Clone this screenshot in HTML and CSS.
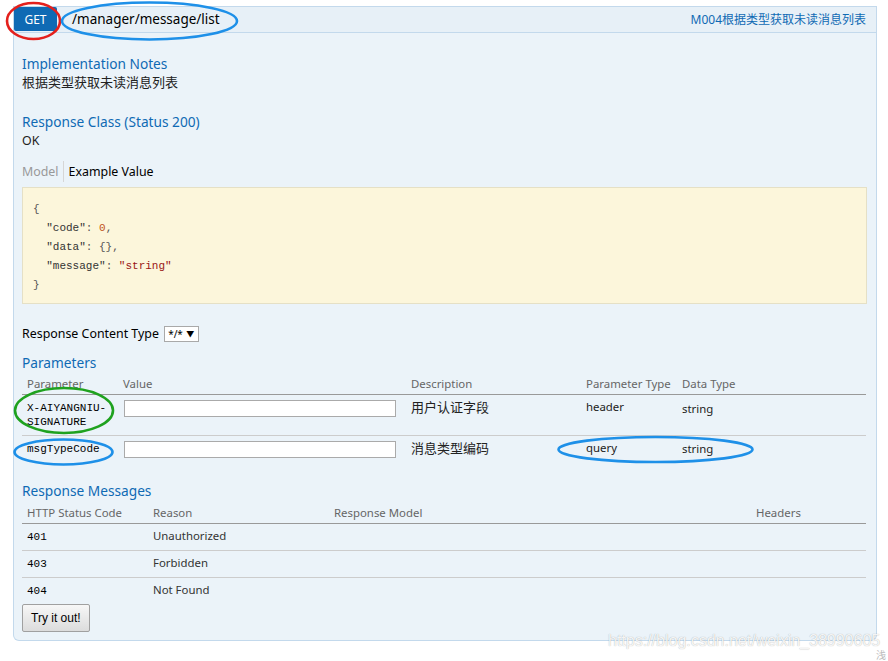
FILE: index.html
```html
<!DOCTYPE html>
<html>
<head>
<meta charset="utf-8">
<title>/manager/message/list</title>
<link rel="stylesheet" href="styles.css">
</head>
<body>
<div class="op">
  <div class="heading">
    <span class="method">GET</span>
    <span class="path">/manager/message/list</span>
    <span class="summary">M004根据类型获取未读消息列表</span>
  </div>
  <div class="content">
    <h4 class="h first">Implementation Notes</h4>
    <p class="text cjk">根据类型获取未读消息列表</p>
    <h4 class="h">Response Class (Status 200)</h4>
    <p class="text ok">OK</p>
    <div class="tabs"><span class="tab-model">Model</span><span class="tab-sep"></span><span class="tab-ex">Example Value</span></div>
<pre class="code"><span class="p">{</span>
  <span class="k">"code"</span><span class="p">:</span> <span class="n">0</span><span class="p">,</span>
  <span class="k">"data"</span><span class="p">: {},</span>
  <span class="k">"message"</span><span class="p">:</span> <span class="s">"string"</span>
<span class="p">}</span></pre>
    <div class="ctype">Response Content Type <span class="select"><span>*/*</span><span class="arrow">▼</span></span></div>
    <h4 class="h params-h">Parameters</h4>
    <table class="tbl ptable">
      <colgroup><col class="c1"><col class="c2"><col class="c3"><col class="c4"><col class="c5"></colgroup>
      <thead>
        <tr><th>Parameter</th><th>Value</th><th>Description</th><th>Parameter Type</th><th>Data Type</th></tr>
      </thead>
      <tbody>
        <tr>
          <td class="mono">X-AIYANGNIU-SIGNATURE</td>
          <td><span class="input"></span></td>
          <td class="desc">用户认证字段</td>
          <td>header</td>
          <td class="dt">string</td>
        </tr>
        <tr>
          <td class="mono">msgTypeCode</td>
          <td><span class="input"></span></td>
          <td class="desc">消息类型编码</td>
          <td>query</td>
          <td class="dt2">string</td>
        </tr>
      </tbody>
    </table>
    <h4 class="h resp-h">Response Messages</h4>
    <table class="tbl rtable">
      <colgroup><col class="r1"><col class="r2"><col class="r3"><col class="r4"></colgroup>
      <thead>
        <tr><th>HTTP Status Code</th><th>Reason</th><th>Response Model</th><th>Headers</th></tr>
      </thead>
      <tbody>
        <tr><td class="mono">401</td><td>Unauthorized</td><td></td><td></td></tr>
        <tr><td class="mono">403</td><td>Forbidden</td><td></td><td></td></tr>
        <tr><td class="mono">404</td><td>Not Found</td><td></td><td></td></tr>
      </tbody>
    </table>
    <button class="try">Try it out!</button>
  </div>
</div>

<svg class="marks" width="888" height="661" viewBox="0 0 888 661">
  <ellipse cx="33.5" cy="21" rx="26.5" ry="18" class="red"/>
  <ellipse cx="149.5" cy="21" rx="87.5" ry="18.5" class="blue"/>
  <ellipse cx="64" cy="410.5" rx="49" ry="22.5" class="green"/>
  <ellipse cx="63.5" cy="452" rx="49" ry="12.5" class="blue"/>
  <ellipse cx="655.5" cy="449.5" rx="97" ry="12.5" class="blue"/>
</svg>
<div class="watermark">https://blog.csdn.net/weixin_38990605</div>
<div class="corner">浅</div>
</body>
</html>
```

FILE: styles.css
```css
body {
  margin: 0;
  background: #fff;
  font-family: "Noto Sans", "Noto Sans CJK SC", sans-serif;
  font-size: 12.4px;
  color: #000;
}

.op {
  margin: 6px 0 0 13px;
  width: 864px;
}

.heading {
  display: flex;
  align-items: flex-start;
  height: 25px;
  border: 1px solid #c3d9ec;
  background: #e7f0f7;
}

.method {
  display: flex;
  align-items: center;
  justify-content: center;
  width: 43px;
  height: 24px;
  background: #0f6ab4;
  color: #fff;
  font-size: 12px;
  border-radius: 2px;
}

.path {
  margin-left: 15px;
  font-size: 13.5px;
  line-height: 25px;
  color: #000;
}

.summary {
  margin-left: auto;
  padding-right: 10px;
  font-size: 12px;
  line-height: 25px;
  color: #0f6ab4;
}

.content {
  background: #ebf3f9;
  border: 1px solid #c3d9ec;
  border-top: none;
  border-radius: 0 0 6px 6px;
  padding: 0 9px 8px 8px;
}

.h {
  margin: 0;
  padding-top: 21px;
  font-size: 13.7px;
  line-height: 19px;
  font-weight: normal;
  color: #0f6ab4;
}

.text {
  margin: 0;
  line-height: 18px;
  color: #222;
}

.text.cjk {
  font-size: 13px;
}

.text.ok {
  padding-top: 1px;
}

.tabs {
  display: flex;
  align-items: stretch;
  margin-top: 11px;
  line-height: 21px;
}

.tab-model {
  color: #999;
  padding-right: 4px;
}

.tab-sep {
  width: 1px;
  background: #d6d6d6;
}

.tab-ex {
  padding-left: 5px;
  color: #000;
}

.code {
  margin: 5px 0 0;
  padding: 12px 10px 8px;
  background: #fcf6db;
  border: 1px solid #e5e0c6;
  font-family: "Liberation Mono", "DejaVu Sans Mono", monospace;
  font-size: 11px;
  line-height: 19px;
  color: #333;
}

.code .k { color: #333; }
.code .p { color: #555; }
.code .n { color: #c0541a; }
.code .s { color: #9a1515; }

.ctype {
  margin-top: 21px;
  line-height: 18px;
  color: #000;
  white-space: nowrap;
}

.select {
  display: inline-flex;
  align-items: center;
  justify-content: space-between;
  box-sizing: border-box;
  height: 16px;
  width: 35px;
  margin-left: 2px;
  padding: 0 4px 0 3px;
  border: 1px solid #a9a9a9;
  background: #fff;
  font-size: 10px;
  line-height: 14px;
  vertical-align: middle;
  position: relative;
  top: -1px;
  white-space: nowrap;
}

.select .arrow {
  font-size: 8px;
}

.params-h {
  padding-top: 10px;
}

.resp-h {
  padding-top: 16px;
}

.tbl {
  width: 844px;
  margin-top: 1px;
  border-collapse: collapse;
  table-layout: fixed;
}

.ptable {
  margin-top: 0;
}

.tbl th {
  text-align: left;
  font-weight: normal;
  font-size: 11.4px;
  color: #666;
  padding: 4px 5px 2px;
  line-height: 16px;
  border-bottom: 1px solid #999;
  white-space: nowrap;
}

.tbl td {
  padding: 5px 5px 7px;
  vertical-align: top;
  font-size: 11.4px;
  line-height: 14px;
  color: #222;
  border-bottom: 1px solid #ccc;
}

.tbl tbody tr:last-child td {
  border-bottom: none;
}

.tbl td.mono {
  font-family: "Liberation Mono", "DejaVu Sans Mono", monospace;
  font-size: 11px;
  color: #000;
  padding-top: 6px;
  padding-bottom: 6px;
}

.tbl td.desc {
  font-size: 13px;
}

.tbl td.dt {
  padding-top: 7px;
}

.tbl td.dt2 {
  padding-top: 6px;
}

.c1 { width: 96px; }
.c2 { width: 288px; }
.c3 { width: 175px; }
.c4 { width: 96px; }
.c5 { width: 189px; }

.r1 { width: 126px; }
.r2 { width: 181px; }
.r3 { width: 422px; }
.r4 { width: 115px; }

.rtable td:nth-child(2) {
  color: #333;
}

.input {
  display: block;
  box-sizing: border-box;
  width: 272px;
  height: 17px;
  margin-left: 1px;
  border: 1px solid #aaa;
  background: #fff;
}

.try {
  display: block;
  height: 28px;
  padding: 0 8px;
  border: 1px solid #a0a0a0;
  border-radius: 2px;
  background: linear-gradient(#f7f7f7, #dcdcdc);
  font-family: "Liberation Sans", Arial, sans-serif;
  font-size: 12px;
  color: #000;
}

.marks {
  position: absolute;
  left: 0;
  top: 0;
  pointer-events: none;
}

.marks ellipse {
  fill: none;
  stroke-width: 2.6;
}

.marks .red { stroke: #e4201c; }
.marks .blue { stroke: #1e90e8; }
.marks .green { stroke: #1fa21f; }

.watermark {
  position: absolute;
  left: 608px;
  top: 632px;
  font-family: "Liberation Sans", Arial, sans-serif;
  font-size: 16px;
  line-height: 18px;
  color: rgba(255, 255, 255, 0.9);
  text-shadow: 0 0 1px rgba(0, 0, 0, 0.35);
  white-space: nowrap;
}

.corner {
  position: absolute;
  left: 876px;
  top: 650px;
  font-size: 10px;
  line-height: 11px;
  color: #bbb;
}
```
